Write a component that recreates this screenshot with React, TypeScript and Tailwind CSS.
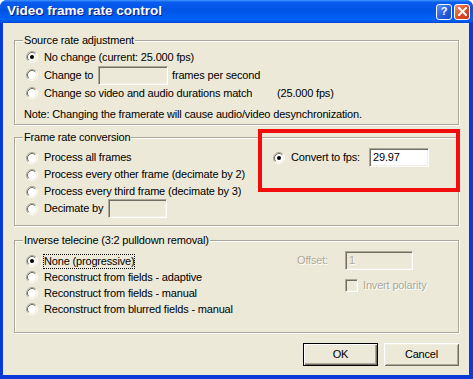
import React from "react";

function Radio({ checked = false }: { checked?: boolean }) {
  return (
    <svg width="12" height="12" viewBox="0 0 12 12" className="shrink-0">
      <circle cx="6" cy="6" r="4.2" fill="#ffffff" />
      <path d="M2.11 9.89 A5.5 5.5 0 0 1 9.89 2.11" fill="none" stroke="#aca899" strokeWidth="1" />
      <path d="M9.89 2.11 A5.5 5.5 0 0 1 2.11 9.89" fill="none" stroke="#ffffff" strokeWidth="1" />
      <path d="M2.82 9.18 A4.5 4.5 0 0 1 9.18 2.82" fill="none" stroke="#716f64" strokeWidth="1" />
      <path d="M9.18 2.82 A4.5 4.5 0 0 1 2.82 9.18" fill="none" stroke="#f1efe2" strokeWidth="1" />
      {checked && <circle cx="6" cy="6" r="2" fill="#000000" />}
    </svg>
  );
}

function RadioRow({
  checked = false,
  focus = false,
  children,
  h = "h-[17px]",
}: {
  checked?: boolean;
  focus?: boolean;
  children: React.ReactNode;
  h?: string;
}) {
  return (
    <div className={`flex items-center ${h}`}>
      <Radio checked={checked} />
      <span
        className={`ml-[5px] border leading-[13px] whitespace-nowrap ${
          focus ? "border-dotted border-black" : "border-transparent"
        }`}
      >
        {children}
      </span>
    </div>
  );
}

function Edit({
  w,
  white = false,
  children,
  disabled = false,
}: {
  w: string;
  white?: boolean;
  children?: React.ReactNode;
  disabled?: boolean;
}) {
  return (
    <div
      className={`${w} h-[19px] shrink-0 border border-t-[#aca899] border-l-[#aca899] border-r-white border-b-white shadow-[inset_1px_1px_0_#716f64,inset_-1px_-1px_0_#f1efe2] flex items-center pl-[3px] leading-none ${
        white ? "bg-white text-black" : "bg-[#ece9d8]"
      } ${disabled ? "text-[#aca899] [text-shadow:1px_1px_0_#fff]" : ""}`}
    >
      {children}
    </div>
  );
}

function Group({
  title,
  h,
  className = "",
  children,
}: {
  title: string;
  h: string;
  className?: string;
  children: React.ReactNode;
}) {
  return (
    <div
      className={`relative ${h} border border-[#aca899] shadow-[inset_1px_1px_0_#fff,1px_1px_0_#fff] ${className}`}
    >
      <span className="absolute left-[8px] top-[-8px] px-[1px] bg-[#ece9d8] leading-[14px] whitespace-nowrap">
        {title}
      </span>
      {children}
    </div>
  );
}

export default function App() {
  return (
    <div className="w-[473px] h-[379px] flex flex-col rounded-t-[7px] overflow-hidden bg-[#0b3ad9] font-['Liberation_Sans',Arial,sans-serif] text-[11px] tracking-[-0.17px] text-black">
      {/* Title bar */}
      <div className="h-[23px] shrink-0 flex items-center bg-[linear-gradient(to_bottom,#3d95ff_0%,#0a5cf0_10%,#0054e3_45%,#0062f6_85%,#0055e5_95%,#003dd7_100%)]">
        <span className="ml-[7px] text-white font-bold text-[13.5px] tracking-[0px] [text-shadow:1px_1px_0_#0a1883]">
          Video frame rate control
        </span>
        <div className="ml-auto mr-[3px] flex gap-[2px] items-center">
          <div className="w-[16px] h-[16px] rounded-[3px] border border-white bg-[linear-gradient(135deg,#5e92f7,#2259e0_60%,#1b48c6)] flex items-center justify-center text-white font-bold text-[11px] leading-none tracking-normal">
            ?
          </div>
          <div className="w-[16px] h-[16px] rounded-[3px] border border-white bg-[linear-gradient(135deg,#f0926e,#e2491c_55%,#c7391b)] flex items-center justify-center">
            <svg width="9" height="9" viewBox="0 0 9 9">
              <path d="M1 1 L8 8 M8 1 L1 8" stroke="#fff" strokeWidth="2" strokeLinecap="square" />
            </svg>
          </div>
        </div>
      </div>

      {/* Frame + body */}
      <div className="flex-1 flex pl-[3px] pr-[4px] pb-[4px]">
        <div className="flex-1 bg-[#ece9d8] flex flex-col pt-[17px] pl-[11px] pr-[10px]">
          {/* Source rate adjustment */}
          <Group title="Source rate adjustment" h="h-[85px]">
            <div className="flex flex-col pt-[7px] pl-[9px]">
              <div className="ml-[2px]">
                <RadioRow checked h="h-[18px]">
                  No change (current: 25.000 fps)
                </RadioRow>
                <RadioRow h="h-[18px]">
                  <span className="flex items-center">
                    <span className="inline-block w-[54px]">Change to</span>
                    <Edit w="w-[70px]" />
                    <span className="ml-[4px]">frames per second</span>
                  </span>
                </RadioRow>
                <RadioRow h="h-[18px]">
                  <span className="inline-block w-[233px]">Change so video and audio durations match</span>
                  <span>(25.000 fps)</span>
                </RadioRow>
              </div>
              <div className="mt-[3px] h-[18px] flex items-center">
                Note: Changing the framerate will cause audio/video desynchronization.
              </div>
            </div>
          </Group>

          {/* Frame rate conversion */}
          <Group title="Frame rate conversion" h="h-[89px]" className="mt-[12px]">
            <div className="flex pt-[11px] pl-[11px]">
              <div className="w-[247px] flex flex-col">
                <RadioRow>Process all frames</RadioRow>
                <RadioRow>Process every other frame (decimate by 2)</RadioRow>
                <RadioRow>Process every third frame (decimate by 3)</RadioRow>
                <RadioRow>
                  <span className="flex items-center">
                    <span className="inline-block w-[64px]">Decimate by</span>
                    <Edit w="w-[59px]" />
                  </span>
                </RadioRow>
              </div>
              <div className="flex flex-col">
                <RadioRow checked>
                  <span className="flex items-center">
                    <span className="inline-block w-[78px]">Convert to fps:</span>
                    <Edit w="w-[60px]" white>
                      29.97
                    </Edit>
                  </span>
                </RadioRow>
              </div>
            </div>
            <div className="absolute left-[243px] top-[-9px] w-[202px] h-[63px] border-[4px] border-[#f20d0d]" />
          </Group>

          {/* Inverse telecine */}
          <Group title="Inverse telecine (3:2 pulldown removal)" h="h-[93px]" className="mt-[14px]">
            <div className="flex pl-[11px]">
              <div className="w-[271px] flex flex-col pt-[12px]">
                <RadioRow checked focus h="h-[16px]">
                  None (progressive)
                </RadioRow>
                <RadioRow h="h-[16px]">Reconstruct from fields - adaptive</RadioRow>
                <RadioRow h="h-[16px]">Reconstruct from fields - manual</RadioRow>
                <RadioRow h="h-[16px]">Reconstruct from blurred fields - manual</RadioRow>
              </div>
              <div className="flex flex-col pt-[10px]">
                <div className="flex items-center">
                  <span className="w-[48px] text-[#aca899] [text-shadow:1px_1px_0_#fff]">Offset:</span>
                  <Edit w="w-[68px]" disabled>
                    1
                  </Edit>
                </div>
                <div className="flex items-center mt-[7px] ml-[48px]">
                  <div className="w-[13px] h-[13px] border border-t-[#aca899] border-l-[#aca899] border-r-white border-b-white shadow-[inset_1px_1px_0_#716f64,inset_-1px_-1px_0_#f1efe2] bg-[#ece9d8]" />
                  <span className="ml-[5px] text-[#aca899] [text-shadow:1px_1px_0_#fff]">Invert polarity</span>
                </div>
              </div>
            </div>
          </Group>

          {/* Buttons */}
          <div className="mt-[10px] flex justify-end gap-[6px]">
            <button className="w-[75px] h-[23px] border border-black bg-[#ece9d8] shadow-[inset_1px_1px_0_#fff,inset_-1px_-1px_0_#716f64,inset_-2px_-2px_0_#aca899] text-black">
              OK
            </button>
            <button className="w-[75px] h-[23px] bg-[#ece9d8] shadow-[inset_1px_1px_0_#fff,inset_-1px_-1px_0_#716f64,inset_2px_2px_0_#f1efe2,inset_-2px_-2px_0_#aca899] text-black">
              Cancel
            </button>
          </div>
        </div>
      </div>
    </div>
  );
}
